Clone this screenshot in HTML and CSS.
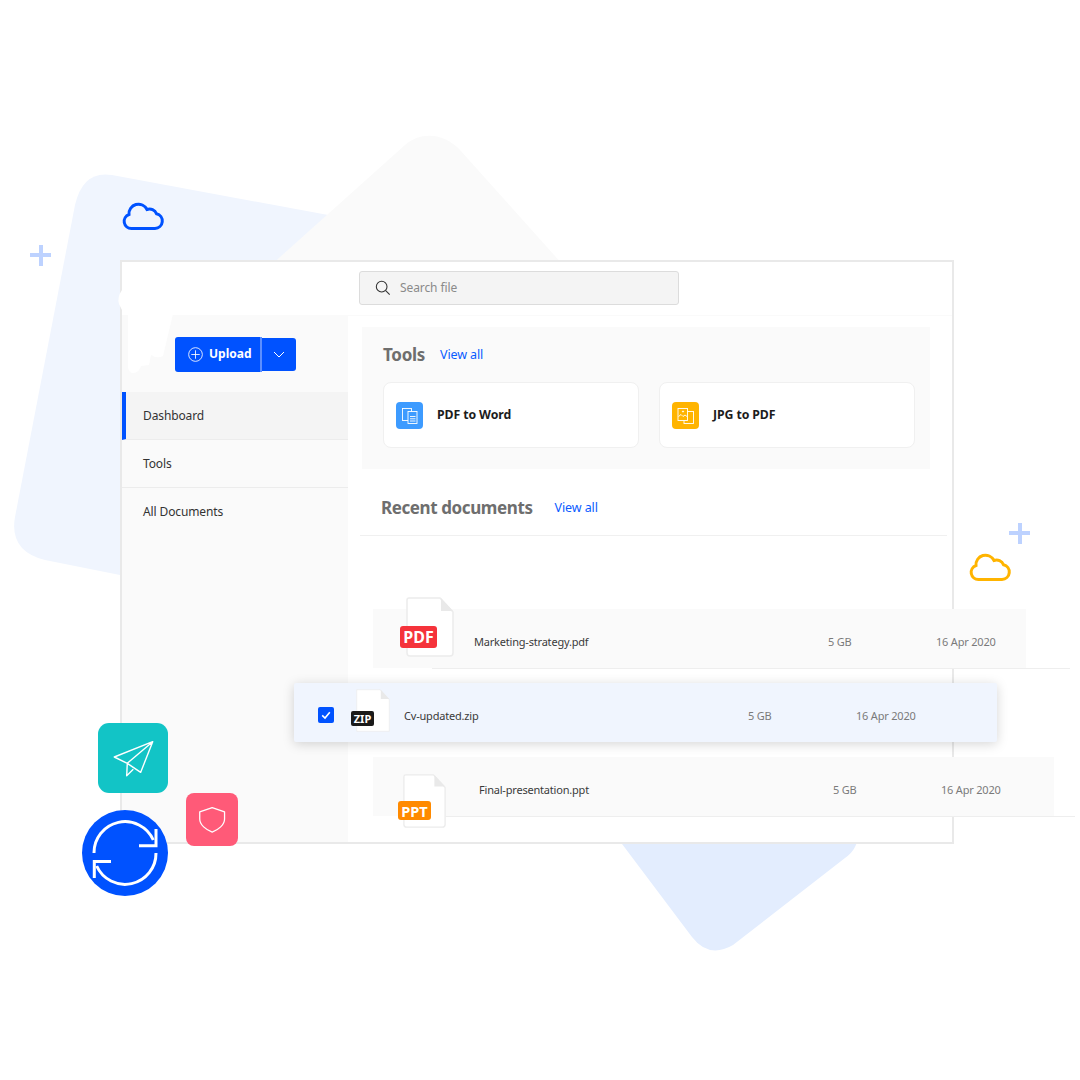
FILE: index.html
```html
<!DOCTYPE html>
<html lang="en">
<head>
    <meta charset="UTF-8">
    <meta name="viewport" content="width=device-width, initial-scale=1.0">
    <title>Documents</title>
    <link rel="stylesheet" href="styles.css">
</head>
<body>
<div class="stage">

    <!-- background shapes, clouds and plus signs -->
    <svg class="decor" viewBox="0 0 1080 1080">
        <path fill="#f0f5fe" d="M112 175 L420 232 L200 591 L45 560 Q9 551 15 517 L75 205 Q83 170 112 175 Z"/>
        <path fill="#fafafa" d="M405 145 C420 132 443 132 460 150 L572 275 L260 275 Z"/>
        <path fill="#e3edfe" d="M610 828 L858 828 Q860 848 845 858 L733 945 Q709 959 692 937 Z"/>
        <g fill="#bdd2ff">
            <rect x="30" y="253" width="21" height="4"/>
            <rect x="39" y="245" width="4" height="21"/>
            <rect x="1009" y="531" width="21" height="4"/>
            <rect x="1018" y="523" width="4" height="21"/>
        </g>
        <path transform="translate(122 201)" fill="none" stroke="#0052ff" stroke-width="3" d="M9.5 27.5 H33 A7.5 7.5 0 0 0 34.5 12.7 A7.5 7.5 0 0 0 25 8.5 A9.5 9.5 0 0 0 7 13.5 A7.2 7.2 0 0 0 9.5 27.5 Z"/>
        <path transform="translate(969 552)" fill="none" stroke="#ffb400" stroke-width="3" d="M9.5 27.5 H33 A7.5 7.5 0 0 0 34.5 12.7 A7.5 7.5 0 0 0 25 8.5 A9.5 9.5 0 0 0 7 13.5 A7.2 7.2 0 0 0 9.5 27.5 Z"/>
    </svg>

    <div class="window">
        <header class="topbar">
            <div class="search">
                <svg class="search-icon" viewBox="0 0 18 18">
                    <circle cx="7.5" cy="7.5" r="6" fill="none" stroke="#333" stroke-width="1.2"/>
                    <path d="M12 12 L16.5 16.5" stroke="#333" stroke-width="1.2"/>
                </svg>
                <span>Search file</span>
            </div>
        </header>

        <div class="content">
            <aside class="sidebar">
                <div class="upload">
                    <button class="upload-main">
                        <svg class="upload-icon" viewBox="0 0 16 16">
                            <circle cx="8" cy="8" r="7.3" fill="none" stroke="#fff" stroke-width="0.9"/>
                            <path d="M8 3.5 V12.5 M3.5 8 H12.5" stroke="#fff" stroke-width="0.9"/>
                        </svg>
                        <span>Upload</span>
                    </button>
                    <button class="upload-more">
                        <svg class="chevron" viewBox="0 0 12 7">
                            <path d="M1 1 L6 6 L11 1" fill="none" stroke="#fff" stroke-width="1"/>
                        </svg>
                    </button>
                </div>
                <nav class="nav">
                    <a class="nav-item active">Dashboard</a>
                    <a class="nav-item">Tools</a>
                    <a class="nav-item last">All Documents</a>
                </nav>
            </aside>

            <main class="main">
                <section class="tools">
                    <div class="section-head">
                        <h2>Tools</h2>
                        <a class="view-all">View all</a>
                    </div>
                    <div class="tool-cards">
                        <div class="tool-card">
                            <svg class="tool-icon blue" viewBox="0 0 27 27">
                                <g fill="none" stroke="#fff" stroke-width="0.9">
                                    <rect x="6.5" y="6.5" width="9" height="12"/>
                                    <rect x="12" y="9.5" width="9" height="12" fill="#3d9bff"/>
                                    <path d="M14 14.5 H19.5 M14 16.8 H19.5 M14 19 H19.5"/>
                                </g>
                            </svg>
                            <span>PDF to Word</span>
                        </div>
                        <div class="tool-card">
                            <svg class="tool-icon yellow" viewBox="0 0 27 27">
                                <g fill="none" stroke="#fff" stroke-width="0.9">
                                    <rect x="12" y="9.5" width="9.5" height="12"/>
                                    <rect x="6" y="6.5" width="9.5" height="12" fill="#ffb400"/>
                                    <path d="M6.5 14.5 L9 12.5 L11 14.5 L13 13 L15 14.5"/>
                                    <circle cx="11" cy="9.5" r="0.6" fill="#fff"/>
                                </g>
                            </svg>
                            <span>JPG to PDF</span>
                        </div>
                    </div>
                </section>

                <div class="section-head recent-head">
                    <h2>Recent documents</h2>
                    <a class="view-all">View all</a>
                </div>

                <div class="doc doc-pdf">
                    <div class="file file-pdf">
                        <svg class="file-page" viewBox="0 0 48 60" preserveAspectRatio="none">
                            <path d="M3 1 H34 L47 15 V56 Q47 59 44 59 H4 Q1 59 1 56 V3 Q1 1 3 1 Z" fill="#fff" stroke="#ececec" stroke-width="1.5"/>
                            <path d="M35 1 L47 14 H35 Z" fill="#e9e9e9"/>
                        </svg>
                        <b class="badge">PDF</b>
                    </div>
                    <span class="doc-name">Marketing-strategy.pdf</span>
                    <span class="doc-size">5 GB</span>
                    <span class="doc-date">16 Apr 2020</span>
                </div>

                <div class="doc doc-zip">
                    <svg class="check" viewBox="0 0 16 16">
                        <rect width="16" height="16" rx="2" fill="#0052ff"/>
                        <path d="M4.2 8.4 L7 11 L11.8 5.2" fill="none" stroke="#fff" stroke-width="1.6"/>
                    </svg>
                    <div class="file file-zip">
                        <svg class="file-page" viewBox="0 0 48 60" preserveAspectRatio="none">
                            <path d="M1 1 H34 L47 15 V59 H1 Z" fill="#fff" stroke="#ececec" stroke-width="1"/>
                            <path d="M35 1 L47 14 H35 Z" fill="#e9e9e9"/>
                        </svg>
                        <b class="badge">ZIP</b>
                    </div>
                    <span class="doc-name">Cv-updated.zip</span>
                    <span class="doc-size">5 GB</span>
                    <span class="doc-date">16 Apr 2020</span>
                </div>

                <div class="doc doc-ppt">
                    <div class="file file-ppt">
                        <svg class="file-page" viewBox="0 0 48 60" preserveAspectRatio="none">
                            <path d="M3 1 H34 L47 15 V56 Q47 59 44 59 H4 Q1 59 1 56 V3 Q1 1 3 1 Z" fill="#fff" stroke="#ececec" stroke-width="1.5"/>
                            <path d="M35 1 L47 14 H35 Z" fill="#e9e9e9"/>
                        </svg>
                        <b class="badge">PPT</b>
                    </div>
                    <span class="doc-name">Final-presentation.ppt</span>
                    <span class="doc-size">5 GB</span>
                    <span class="doc-date">16 Apr 2020</span>
                </div>
            </main>
        </div>
    </div>

    <!-- white patch left over the sidebar corner -->
    <svg class="patch" viewBox="0 0 1080 1080">
        <path fill="#fff" d="M128 314 L173 314 L163 356 Q157 359 151 355 L149 365 L141 366 Q139 373 133 373 Q128 373 128 366 Z"/>
        <path fill="#fff" d="M122 290 Q117 297 119 304 L122 310 Z"/>
    </svg>

    <div class="tile tile-send">
        <svg viewBox="0 0 70 70">
            <path d="M54.7 18.7 L16.3 34 L29.3 40.3 L42.7 49.3 Z M54.7 18.7 L29.3 40.3 L28.7 52.7 L35.3 46.3" fill="none" stroke="#fff" stroke-width="1.4" stroke-linejoin="round"/>
        </svg>
    </div>
    <div class="tile tile-shield">
        <svg viewBox="0 0 53 53">
            <path d="M26.7 14.3 L39.3 18.7 V26 C39.3 32 33 37 26.7 39.3 C20.4 37 14 32 14 26 V18.7 Z" fill="none" stroke="#fff" stroke-width="1.3" stroke-linejoin="round"/>
        </svg>
    </div>
    <div class="tile tile-sync">
        <svg viewBox="0 0 86 86">
            <g fill="none" stroke="#fff" stroke-width="3">
                <path d="M12 43 A31 31 0 0 1 71.3 30"/>
                <path d="M74 19 V35.7 H57"/>
                <path d="M74 43 A31 31 0 0 1 14.7 56"/>
                <path d="M12.3 68 V51.4 H29"/>
            </g>
        </svg>
    </div>
</div>
</body>
</html>
```

FILE: styles.css
```css
body {
    margin: 0;
    background: #fff;
    font-family: "Noto Sans", Arial, sans-serif;
    color: #333;
}
.stage {
    position: relative;
    width: 1080px;
    height: 1080px;
    overflow: hidden;
}
.decor, .patch {
    position: absolute;
    left: 0;
    top: 0;
    width: 1080px;
    height: 1080px;
}
.window {
    position: absolute;
    left: 120px;
    top: 260px;
    width: 834px;
    height: 584px;
    box-sizing: border-box;
    border: 2px solid #e9e9e9;
    background: #fff;
    display: flex;
    flex-direction: column;
}
.topbar {
    height: 54px;
    flex: none;
    padding: 9px 0 0 237px;
    box-sizing: border-box;
    border-bottom: 1px solid #fafafa;
}
.search {
    width: 320px;
    height: 34px;
    box-sizing: border-box;
    background: #f4f4f4;
    border: 1px solid #dcdcdc;
    border-radius: 3px;
    display: flex;
    align-items: center;
    padding: 0 0 2px 15px;
    gap: 9px;
    font-size: 12px;
    letter-spacing: -0.1px;
    color: #8a8a8a;
}
.search-icon {
    width: 16px;
    height: 16px;
    margin-top: 2px;
}
.content {
    flex: 1;
    display: flex;
    min-height: 0;
}
.sidebar {
    width: 226px;
    flex: none;
    background: #fafafa;
    padding-top: 21px;
    box-sizing: border-box;
}
.upload {
    display: flex;
    align-items: center;
    margin-left: 53px;
}
.upload-main, .upload-more {
    border: none;
    background: #0052ff;
    color: #fff;
    font-family: inherit;
    display: flex;
    align-items: center;
    box-sizing: border-box;
}
.upload-main {
    width: 87px;
    height: 35px;
    border-radius: 3px 0 0 3px;
    border-right: 2px solid #5c8fff;
    font-size: 12px;
    font-weight: 700;
    gap: 6px;
    padding: 0 0 0 13px;
}
.upload-main span {
    margin-bottom: 2px;
}
.upload-more {
    width: 34px;
    height: 33px;
    border-radius: 0 3px 3px 0;
    justify-content: center;
    padding: 0;
}
.upload-icon {
    width: 15px;
    height: 15px;
}
.chevron {
    width: 12px;
    height: 7px;
}
.nav {
    margin-top: 20px;
    display: flex;
    flex-direction: column;
}
.nav-item {
    height: 48px;
    box-sizing: border-box;
    padding-left: 21px;
    display: flex;
    align-items: center;
    font-size: 12px;
    letter-spacing: -0.12px;
    color: #333;
    border-bottom: 1px solid #ececec;
}
.nav-item.active {
    background: #f4f4f4;
    border-left: 4px solid #0052ff;
    padding-left: 17px;
}
.nav-item.last {
    border-bottom: none;
    padding-bottom: 2px;
}
.main {
    flex: 1;
    min-width: 0;
    padding-top: 11px;
}
.tools {
    width: 568px;
    height: 142px;
    margin-left: 14px;
    background: #fafafa;
    box-sizing: border-box;
    padding: 15px 15px 0 21px;
}
.section-head {
    display: flex;
    align-items: center;
    gap: 15px;
    height: 24px;
}
.section-head h2 {
    margin: 0;
    font-size: 17px;
    font-weight: 700;
    letter-spacing: -0.3px;
    color: #6e6e6e;
}
.view-all {
    font-size: 12.5px;
    letter-spacing: -0.1px;
    color: #0a5cff;
}
.tool-cards {
    display: flex;
    gap: 20px;
    margin-top: 16px;
}
.tool-card {
    width: 256px;
    height: 66px;
    box-sizing: border-box;
    background: #fff;
    border: 1px solid #f0f0f0;
    border-radius: 8px;
    display: flex;
    align-items: center;
    gap: 14px;
    padding-left: 12px;
    font-size: 12.3px;
    font-weight: 700;
    letter-spacing: -0.1px;
    color: #1c1c1c;
}
.tool-card span {
    margin-bottom: 2px;
}
.tool-icon {
    width: 27px;
    height: 27px;
    border-radius: 4px;
}
.tool-icon.blue {
    background: #3d9bff;
}
.tool-icon.yellow {
    background: #ffb400;
}
.recent-head {
    margin: 26px 0 0 12px;
    width: 587px;
    height: 41px;
    box-sizing: border-box;
    padding: 0 0 15px 21px;
    gap: 22px;
    border-bottom: 1px solid #f0f0f0;
}
.recent-head h2 {
    letter-spacing: -0.4px;
}
.doc {
    position: relative;
    height: 59px;
    display: flex;
    align-items: center;
    box-sizing: border-box;
    background: #fafafa;
    font-size: 11px;
    letter-spacing: -0.2px;
}
.doc::after {
    content: "";
    position: absolute;
    top: 100%;
    height: 1px;
    background: #eeeeee;
}
.doc-pdf {
    width: 653px;
    margin: 73px 0 0 25px;
    padding-left: 27px;
}
.doc-pdf::after {
    left: 59px;
    width: 638px;
}
.doc-zip {
    width: 703px;
    margin: 15px 0 0 -54px;
    padding-left: 24px;
    background: #f0f5fe;
    border-radius: 2px;
    box-shadow: 0 2px 12px rgba(0, 0, 0, 0.17);
    z-index: 1;
}
.doc-zip::after {
    display: none;
}
.doc-ppt {
    width: 681px;
    margin: 15px 0 0 25px;
    padding-left: 25px;
}
.doc-ppt::after {
    left: 72px;
    width: 630px;
}
.check {
    width: 16px;
    height: 16px;
    flex: none;
    margin-right: 17px;
    margin-top: 4px;
}
.file {
    position: relative;
    flex: none;
}
.file-page {
    position: absolute;
    display: block;
}
.badge {
    position: absolute;
    left: 0;
    color: #fff;
    font-weight: 700;
    letter-spacing: 0;
    border-radius: 3px;
    display: flex;
    align-items: center;
    justify-content: center;
}
.file-pdf {
    width: 74px;
    height: 60px;
    margin-bottom: 23px;
}
.file-pdf .file-page {
    left: 6px;
    top: 0;
    width: 48px;
    height: 60px;
}
.file-pdf .badge {
    top: 29px;
    width: 37px;
    height: 22px;
    background: #f5333b;
    font-size: 16px;
}
.file-zip {
    width: 53px;
    height: 43px;
    margin-bottom: 4px;
}
.file-zip .file-page {
    left: 5px;
    top: 0;
    width: 34px;
    height: 43px;
}
.file-zip .badge {
    top: 22px;
    width: 23px;
    height: 15px;
    background: #1a1a1a;
    font-size: 11px;
    border-radius: 2px;
}
.file-ppt {
    width: 81px;
    height: 54px;
    margin-bottom: -29px;
}
.file-ppt .file-page {
    left: 5px;
    top: 0;
    width: 43px;
    height: 54px;
}
.file-ppt .badge {
    top: 27px;
    width: 33px;
    height: 19px;
    background: #ff8a00;
    font-size: 14.5px;
}
.doc-name {
    width: 354px;
    flex: none;
    color: #3a3a3a;
    margin-top: 6px;
}
.doc-zip .doc-name {
    width: 344px;
}
.doc-ppt .doc-name {
    width: 354px;
}
.doc-size {
    width: 108px;
    flex: none;
    color: #7a7a7a;
    margin-top: 6px;
}
.doc-date {
    color: #7a7a7a;
    margin-top: 6px;
}
.tile {
    position: absolute;
    display: flex;
}
.tile svg {
    width: 100%;
    height: 100%;
}
.tile-send {
    left: 98px;
    top: 723px;
    width: 70px;
    height: 70px;
    border-radius: 11px;
    background: #12c4c6;
}
.tile-shield {
    left: 186px;
    top: 793px;
    width: 52px;
    height: 53px;
    border-radius: 8px;
    background: #ff5a78;
}
.tile-sync {
    left: 82px;
    top: 810px;
    width: 86px;
    height: 86px;
    border-radius: 50%;
    background: #0052ff;
}
```
